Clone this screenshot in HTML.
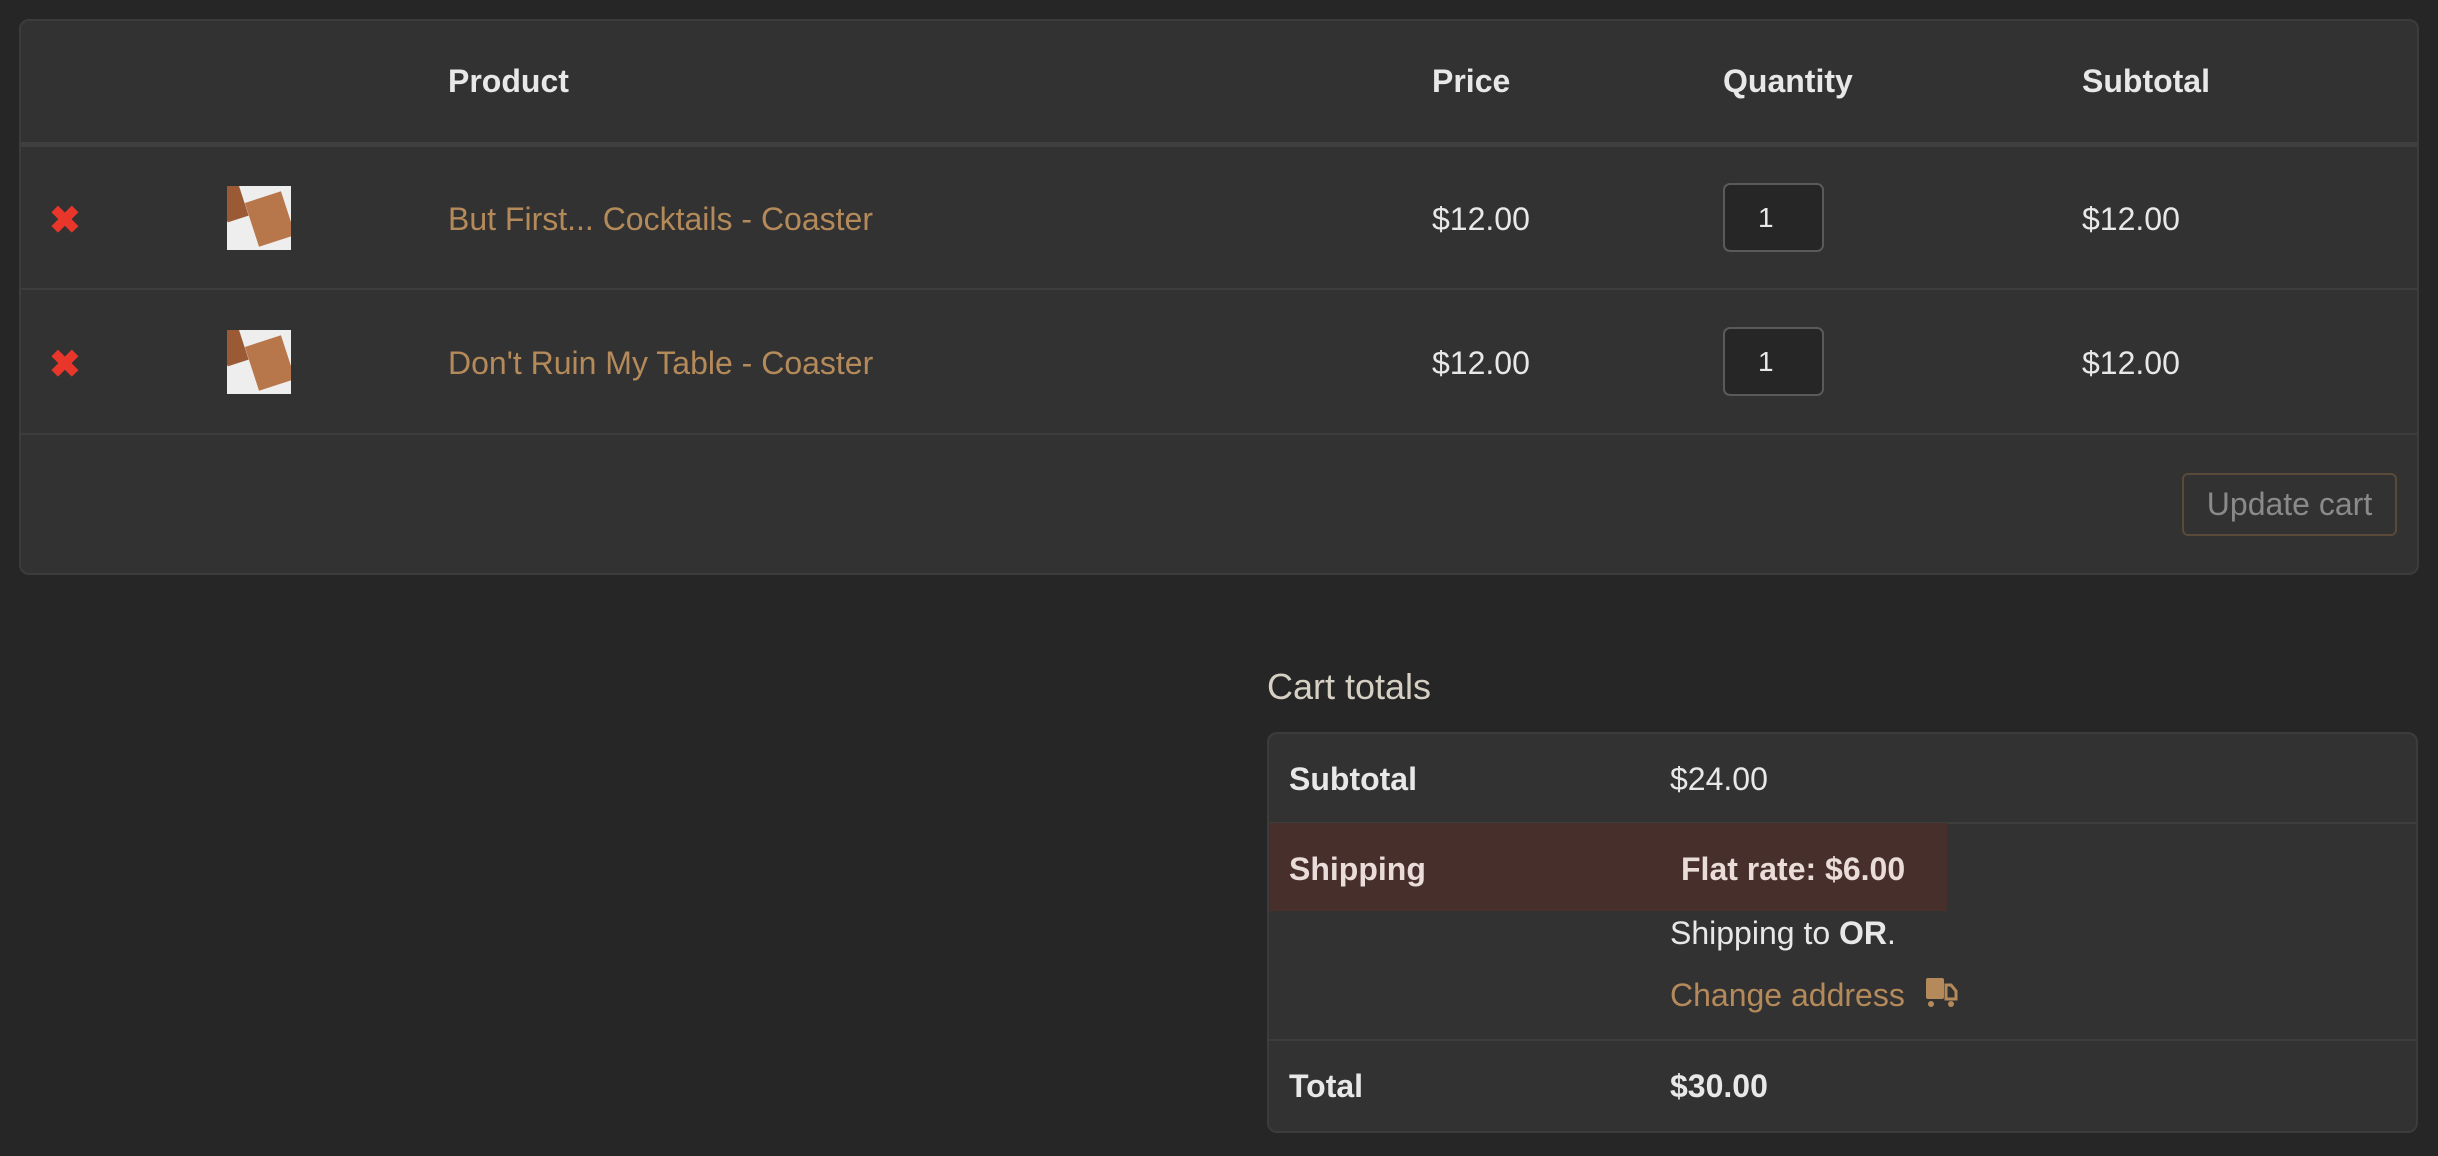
<!DOCTYPE html>
<html><head><meta charset="utf-8"><style>
*{margin:0;padding:0;box-sizing:border-box}
body{width:2438px;height:1156px;background:#262626;font-family:"Liberation Sans",Arial,sans-serif;color:#e8e8e8;position:relative;overflow:hidden;font-size:32px}
.a{position:absolute;white-space:nowrap;line-height:1}
.box{position:absolute;background:#323232;border:2px solid #3c3c3c;border-radius:10px}
.hl{position:absolute;height:2px;background:#3d3d3d}
.b{font-weight:bold}
.g{color:#b58a5a}
.x{position:absolute;color:#e8362a;font-weight:bold;font-size:38px;line-height:1}
.th{position:absolute;width:64px;height:64px;background:#eeeeee;overflow:hidden}
.th i{position:absolute;left:24px;top:10px;width:38px;height:46px;background:#b8774a;transform:rotate(-18deg)}
.th u{position:absolute;left:-6px;top:-6px;width:22px;height:40px;background:#9a5a36;transform:rotate(-18deg)}
.q{position:absolute;width:101px;height:69px;background:#262626;border:2px solid #5a5a5a;border-radius:7px;padding-left:33px;line-height:65px;font-size:28px}
</style></head><body>
<div class="box" style="left:19px;top:19px;width:2400px;height:556px"></div>
<div class="a b" style="left:448px;top:65px">Product</div>
<div class="a b" style="left:1432px;top:65px">Price</div>
<div class="a b" style="left:1723px;top:65px">Quantity</div>
<div class="a b" style="left:2082px;top:65px">Subtotal</div>
<div class="hl" style="left:21px;top:142px;width:2396px;height:5px;background:#3f3f3f"></div>
<div class="x" style="left:49px;top:202px">✖</div>
<div class="th" style="left:227px;top:186px"><u></u><i></i></div>
<div class="a g" style="left:448px;top:203px">But First... Cocktails - Coaster</div>
<div class="a" style="left:1432px;top:203px">$12.00</div>
<div class="q" style="left:1723px;top:183px">1</div>
<div class="a" style="left:2082px;top:203px">$12.00</div>
<div class="hl" style="left:21px;top:288px;width:2396px"></div>
<div class="x" style="left:49px;top:346px">✖</div>
<div class="th" style="left:227px;top:330px"><u></u><i></i></div>
<div class="a g" style="left:448px;top:347px">Don't Ruin My Table - Coaster</div>
<div class="a" style="left:1432px;top:347px">$12.00</div>
<div class="q" style="left:1723px;top:327px">1</div>
<div class="a" style="left:2082px;top:347px">$12.00</div>
<div class="hl" style="left:21px;top:433px;width:2396px"></div>
<div style="position:absolute;left:2182px;top:473px;width:215px;height:63px;border:2px solid #5a4a38;border-radius:6px;color:#8a8a8a;font-size:32px;line-height:59px;text-align:center">Update cart</div>

<div class="a" style="left:1267px;top:669px;font-size:36px;color:#d6d0c4">Cart totals</div>
<div class="box" style="left:1267px;top:732px;width:1151px;height:401px"></div>
<div class="a b" style="left:1289px;top:763px">Subtotal</div>
<div class="a" style="left:1670px;top:763px">$24.00</div>
<div class="hl" style="left:1269px;top:822px;width:1147px"></div>
<div style="position:absolute;left:1269px;top:823px;width:678px;height:88px;background:#472f2c"></div>
<div class="a b" style="left:1289px;top:853px;color:#eadcd8">Shipping</div>
<div class="a b" style="left:1681px;top:853px;color:#eadcd8">Flat rate: $6.00</div>
<div class="a" style="left:1670px;top:917px">Shipping to <b>OR</b>.</div>
<div class="a g" style="left:1670px;top:979px">Change address</div>
<svg style="position:absolute;left:1924px;top:977px" width="34" height="32" viewBox="0 0 34 32"><rect x="2" y="1" width="18" height="21" rx="2" fill="#b58a5a"/><path d="M22 8h5l5 6v8H22z" fill="none" stroke="#b58a5a" stroke-width="3"/><circle cx="7" cy="27" r="3" fill="#b58a5a"/><circle cx="27" cy="27" r="3" fill="#b58a5a"/></svg>
<div class="hl" style="left:1269px;top:1039px;width:1147px"></div>
<div class="a b" style="left:1289px;top:1070px">Total</div>
<div class="a b" style="left:1670px;top:1070px">$30.00</div>
</body></html>
